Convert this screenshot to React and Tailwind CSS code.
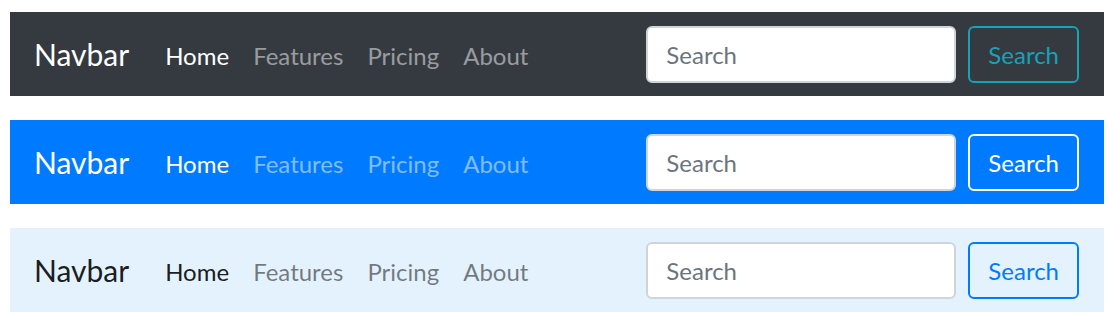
const variants = [
  {
    key: 'dark',
    bar: 'bg-[#343a40]',
    brand: 'text-white',
    active: 'text-white',
    link: 'text-white/50',
    button: 'border-[#17a2b8] text-[#17a2b8]',
  },
  {
    key: 'primary',
    bar: 'bg-[#007bff]',
    brand: 'text-white',
    active: 'text-white',
    link: 'text-white/50',
    button: 'border-white text-white',
  },
  {
    key: 'light',
    bar: 'bg-[#e3f2fd]',
    brand: 'text-black/90',
    active: 'text-black/90',
    link: 'text-black/50',
    button: 'border-[#007bff] text-[#007bff]',
  },
];

const links = ['Home', 'Features', 'Pricing', 'About'];

function Navbar({ v }) {
  return (
    <nav className={`flex items-center h-[84px] pl-[24px] pr-[25px] ${v.bar}`}>
      <a href="#" className={`text-[30px] leading-none mr-[24px] ${v.brand}`}>Navbar</a>
      <ul className="flex items-center pt-[3px]">
        {links.map((l, i) => (
          <li key={l}>
            <a href="#" className={`block px-[12px] text-[24px] leading-none ${i === 0 ? v.active : v.link}`}>{l}</a>
          </li>
        ))}
      </ul>
      <form className="ml-auto flex items-center" onSubmit={(e) => e.preventDefault()}>
        <input
          type="search"
          placeholder="Search"
          className="w-[310px] h-[57px] mr-[12px] px-[18px] bg-white border-2 border-[#ced4da] rounded-[6px] text-[24px] text-[#495057] placeholder:text-[#6c757d] outline-none"
        />
        <button type="submit" className={`h-[57px] px-[18px] pt-[2px] border-2 rounded-[6px] bg-transparent text-[24px] ${v.button}`}>
          Search
        </button>
      </form>
    </nav>
  );
}

export default function App() {
  return (
    <div className="bg-white min-h-[325px] pt-[12px] font-['Lato',sans-serif]">
      <div className="w-[1094px] ml-[10px] flex flex-col gap-[24px]">
        {variants.map(v => <Navbar key={v.key} v={v} />)}
      </div>
    </div>
  );
}
